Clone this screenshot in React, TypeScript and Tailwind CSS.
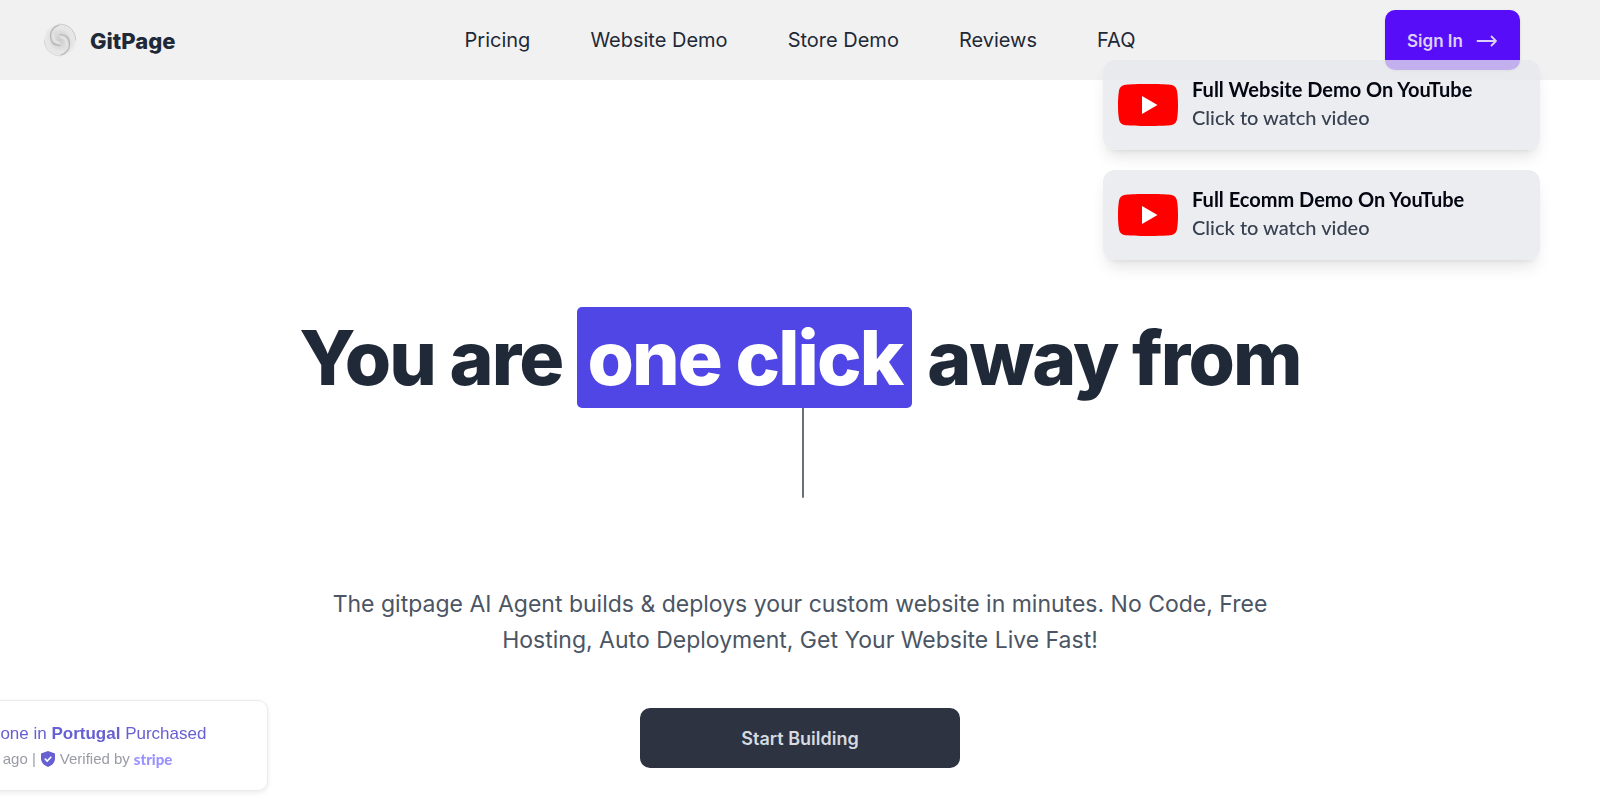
const links = ["Pricing", "Website Demo", "Store Demo", "Reviews", "FAQ"];
const demos = ["Full Website Demo On YouTube", "Full Ecomm Demo On YouTube"];

function Swirl() {
  return (
    <svg viewBox="0 0 34 34" className="size-[34px]" aria-hidden="true">
      <defs>
        <radialGradient id="shell">
          <stop offset="0" stopColor="#cccccc" />
          <stop offset="0.5" stopColor="#dcdcdc" />
          <stop offset="1" stopColor="#ebebeb" />
        </radialGradient>
      </defs>
      <circle cx="17" cy="17" r="16" fill="url(#shell)" />
      <g fill="none" strokeLinecap="round">
        <path d="M17 1.200C26 1.500 32.500 8 32.500 17" stroke="#c0c0c0" strokeWidth="1" strokeDasharray="1 1" />
        <path d="M17 32.800C8 32.500 1.500 26 1.500 17" stroke="#d2d2d2" strokeWidth="1" strokeDasharray="1 1" />
        <path d="M16 2C10 4 7.500 8 7.500 13C7.500 19 11 22.500 17 22.500" stroke="#b4b4b4" strokeWidth="1.200" />
        <path d="M18 32C24 30 26.500 26 26.500 21C26.500 15 23 11.500 17 11.500" stroke="#b4b4b4" strokeWidth="1.200" />
        <path d="M15 5.500C22 4.500 28.500 9 29 16" stroke="#e6e6e6" strokeWidth="3" />
        <path d="M19 28.500C12 29.500 5.500 25 5 18" stroke="#e6e6e6" strokeWidth="3" />
        <path d="M10.500 12C10.500 16.500 12.500 19.500 16 19.800" stroke="#e4e4e4" strokeWidth="2" />
        <path d="M23.500 22C23.500 17.500 21.500 14.500 18 14.200" stroke="#e4e4e4" strokeWidth="2" />
      </g>
    </svg>
  );
}

function YouTubeMark() {
  return (
    <svg viewBox="0 0 60 42" className="h-[42px] w-[60px] shrink-0" aria-hidden="true">
      <path
        d="M30 0C40 0 48 .3 52 .7C57 1.200 58.700 4 59.200 8C59.800 12 60 16 60 21C60 26 59.800 30 59.200 34C58.700 38 57 40.800 52 41.300C48 41.700 40 42 30 42C20 42 12 41.700 8 41.300C3 40.800 1.300 38 .8 34C.2 30 0 26 0 21C0 16 .2 12 .8 8C1.300 4 3 1.200 8 .7C12 .3 20 0 30 0Z"
        fill="#ff0000"
      />
      <path d="M24 12L39.500 21L24 30Z" fill="#fff" />
    </svg>
  );
}

export default function App() {
  return (
    <div className="min-h-screen overflow-x-hidden bg-white font-['Inter',sans-serif] text-gray-800">
      <header className="flex h-20 items-center bg-[#f1f1f1] pr-20 pl-[43px] text-[#1f2937]">
        <a href="#" className="flex flex-1 items-center gap-[13px] text-[22px] font-extrabold">
          <Swirl />
          <span className="pt-[2px]">GitPage</span>
        </a>
        <nav className="mr-[-37px] flex gap-[60px] text-[20px]">
          {links.map((l) => (
            <a key={l} href="#">{l}</a>
          ))}
        </nav>
        <div className="flex flex-1 justify-end">
          <button className="flex h-[60px] w-[135px] items-center justify-center gap-[13px] rounded-[10px] bg-[#570df8] pt-[2px] text-[17px] leading-7 font-semibold text-[#ddd0fc] shadow-sm">
            Sign In
            <svg viewBox="0 0 22 12" className="h-3 w-[22px]" fill="none" stroke="currentColor" strokeWidth="1.800" strokeLinecap="round" strokeLinejoin="round" aria-hidden="true">
              <path d="M1.500 6H20M15.500 1.500L20 6L15.500 10.500" />
            </svg>
          </button>
        </div>
      </header>

      <main className="flex flex-col items-center pt-[227px] text-center">
        <h1 className="flex items-center gap-[15px] text-[75px] leading-[101px] font-extrabold tracking-tight text-[#1f2937]">
          <span>You are</span>
          <span className="rounded-[5px] bg-[#4f46e5] px-[10px] text-white">one click</span>
          <span>away from</span>
        </h1>
        <div className="ml-[6px] h-[90px] w-[2px] rounded-b-sm bg-[#66717e]" />
        <p className="mt-[88px] max-w-[960px] text-[23px] leading-9 text-[#4b5563]">
          The gitpage AI Agent builds &amp; deploys your custom website in minutes. No Code, Free
          Hosting, Auto Deployment, Get Your Website Live Fast!
        </p>
        <button className="mt-[50px] h-[60px] w-[320px] rounded-[10px] bg-[#2d3340] text-[18px] font-semibold text-[#d5dae1]">
          Start Building
        </button>
      </main>

      <aside className="fixed top-[60px] right-[60px] flex w-[437px] flex-col gap-5 font-['Lato',sans-serif] text-[20px] leading-7">
        {demos.map((d) => (
          <a
            key={d}
            href="#"
            className="flex h-[90px] items-center gap-[14px] rounded-xl bg-[#e5e7eb]/75 px-[15px] shadow-[0_10px_15px_-3px_rgba(0,0,0,0.1),0_4px_6px_-4px_rgba(0,0,0,0.1)]"
          >
            <YouTubeMark />
            <span className="flex flex-col pb-[4px]">
              <span className="font-bold text-[#030712]">{d}</span>
              <span className="font-medium text-[#374151]">Click to watch video</span>
            </span>
          </a>
        ))}
      </aside>

      <aside className="fixed bottom-[20px] left-[-120px] flex h-[91px] w-[388px] flex-col justify-center gap-[3px] rounded-[10px] border border-[#ebebeb] bg-white pt-[2px] pl-[75px] font-['Liberation_Sans',Arial,sans-serif] text-[17px] leading-[22px] whitespace-nowrap text-[#6760d2] shadow-[0_2px_5px_rgba(0,0,0,0.08)]">
        <p>
          Someone in <b>Portugal</b> Purchased
        </p>
        <p className="flex items-center text-[15px] text-[#9a9ca5]">
          1 hour ago |
          <svg viewBox="0 0 14 16" className="mr-[5px] ml-[5px] h-4 w-[14px]" aria-hidden="true">
            <path d="M7 0L14 2.600V7.500C14 11.500 11 14.500 7 16C3 14.500 0 11.500 0 7.500V2.600Z" fill="#6760d2" />
            <path d="M3.800 7.700L6.200 10L10.300 5.700" fill="none" stroke="#fff" strokeWidth="1.600" />
          </svg>
          Verified by
          <span className="ml-[4px] font-['Lato',sans-serif] text-[15px] font-black text-[#9a93ff]">stripe</span>
        </p>
      </aside>
    </div>
  );
}
